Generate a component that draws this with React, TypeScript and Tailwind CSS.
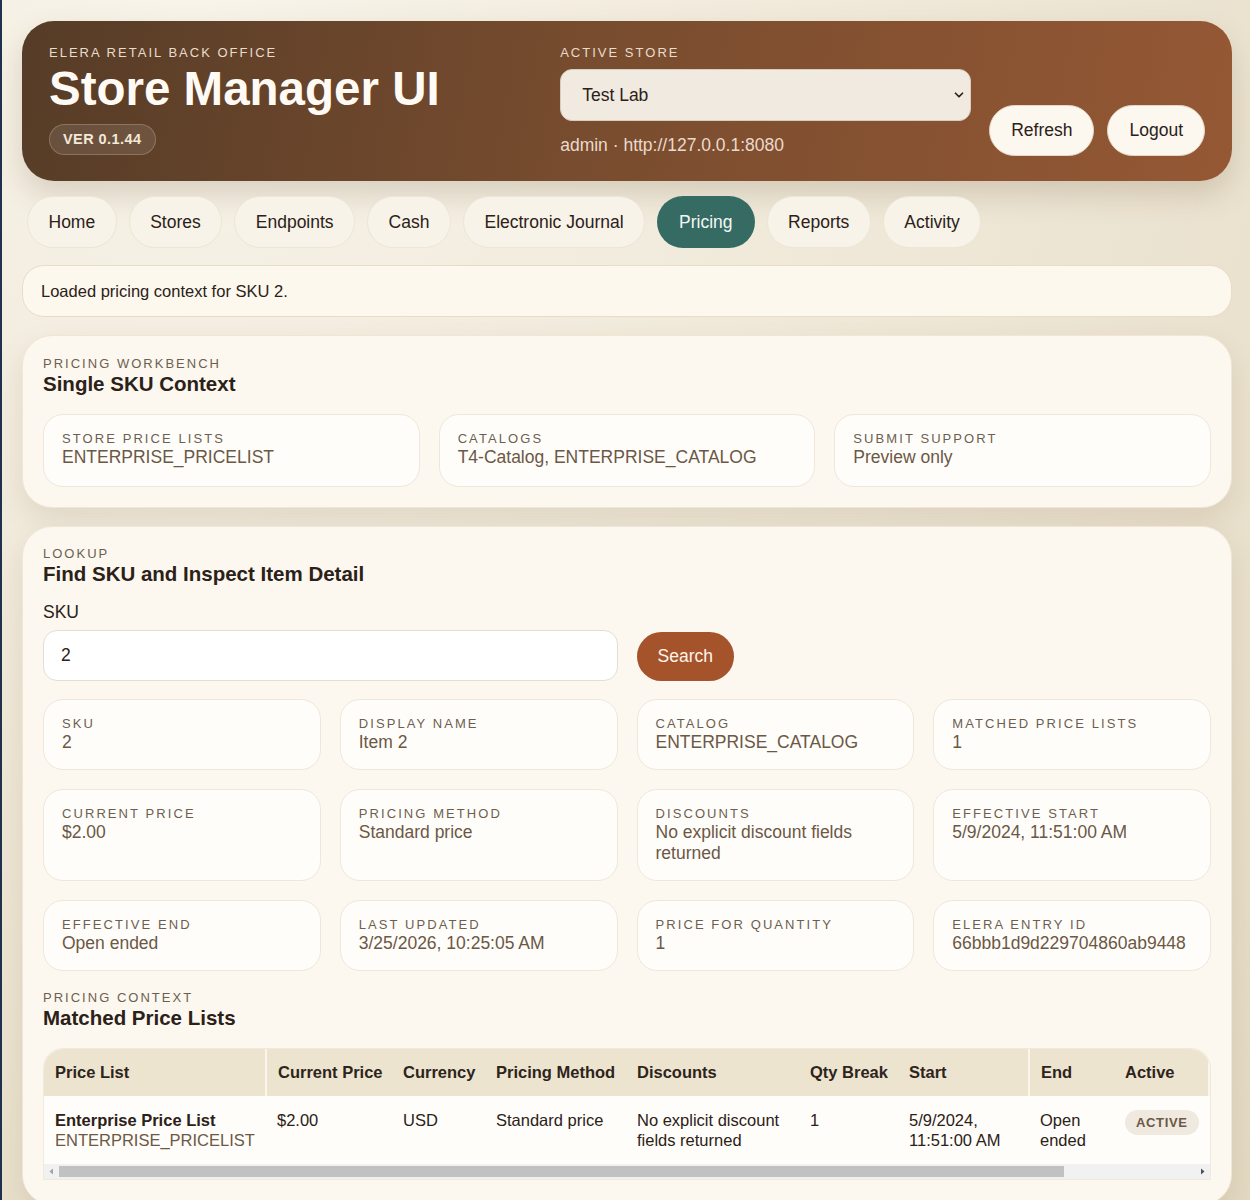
import { ChevronDown } from "lucide-react";

const navItems = ["Home", "Stores", "Endpoints", "Cash", "Electronic Journal", "Pricing", "Reports", "Activity"];

const contextCards = [
  { label: "Store Price Lists", value: "ENTERPRISE_PRICELIST" },
  { label: "Catalogs", value: "T4-Catalog, ENTERPRISE_CATALOG" },
  { label: "Submit Support", value: "Preview only" },
];

const detailCards = [
  { label: "SKU", value: "2" },
  { label: "Display Name", value: "Item 2" },
  { label: "Catalog", value: "ENTERPRISE_CATALOG" },
  { label: "Matched Price Lists", value: "1" },
  { label: "Current Price", value: "$2.00" },
  { label: "Pricing Method", value: "Standard price" },
  { label: "Discounts", value: "No explicit discount fields returned" },
  { label: "Effective Start", value: "5/9/2024, 11:51:00 AM" },
  { label: "Effective End", value: "Open ended" },
  { label: "Last Updated", value: "3/25/2026, 10:25:05 AM" },
  { label: "Price For Quantity", value: "1" },
  { label: "Elera Entry ID", value: "66bbb1d9d229704860ab9448" },
];

const columns = [
  { label: "Price List", width: "w-[222px]", sep: true },
  { label: "Current Price", width: "w-[126px]", sep: false },
  { label: "Currency", width: "w-[93px]", sep: false },
  { label: "Pricing Method", width: "w-[141px]", sep: false },
  { label: "Discounts", width: "w-[173px]", sep: false },
  { label: "Qty Break", width: "w-[99px]", sep: false },
  { label: "Start", width: "w-[131px]", sep: true },
  { label: "End", width: "w-[85px]", sep: false },
  { label: "Active", width: "w-[95px]", sep: true },
  { label: "", width: "w-[160px]", sep: false },
];

function Eyebrow({ children }: { children: React.ReactNode }) {
  return <p className="text-[13px] uppercase leading-4 tracking-[0.155em] text-[#6d5f50]">{children}</p>;
}

function InfoCard({ label, value, tall }: { label: string; value: string; tall?: boolean }) {
  return (
    <div className={`rounded-[20px] border border-[#efe7da] bg-[#fffdfa] px-[18px] pt-[16px] ${tall ? "pb-[18px]" : "pb-[16px]"}`}>
      <p className="text-[13px] uppercase leading-4 tracking-[0.16em] text-[#6d5f50]">{label}</p>
      <p className="text-[17.5px] leading-[21px] text-[#6b5845]">{value}</p>
    </div>
  );
}

export default function App() {
  return (
    <div
      className="min-h-screen border-l-2 border-[#20324f] bg-[radial-gradient(circle_at_15%_0%,#f8f4ea_0%,#efe8d8_45%,#e3d9c1_100%)] pb-10 pl-[20px] pr-[18px] pt-[21px] text-[#2b2118]"
      style={{ fontFamily: '"Liberation Sans", Arial, sans-serif' }}
    >
      <div className="flex flex-col">
        <header className="flex h-[160px] rounded-[32px] bg-[linear-gradient(100deg,#563c27_0%,#7a4d2f_50%,#955835_100%)] px-[27px] pb-[25px] pt-[24px] shadow-[0_14px_30px_rgba(90,60,30,0.18)]">
          <div className="flex-1">
            <p className="text-[13px] uppercase leading-4 tracking-[0.155em] text-[#e9dccb]">Elera Retail Back Office</p>
            <h1 className="mt-[2px] text-[47.5px] font-bold leading-[52px] text-[#fffaf3]">Store Manager UI</h1>
            <div className="mt-[9px] flex h-[31px] w-fit items-center rounded-full border border-white/20 bg-white/10 px-[13px] text-[14.5px] font-bold tracking-[0.03em] text-[#f4e8d8]">
              VER 0.1.44
            </div>
          </div>
          <div className="w-[411px]">
            <p className="text-[13px] uppercase leading-4 tracking-[0.155em] text-[#e9dccb]">Active Store</p>
            <div className="mt-[8px] flex h-[52px] items-center justify-between rounded-[12px] border border-[#d9cdbd] bg-[#f1eae0] pl-[21px] pr-[4px] text-[17.5px] text-[#2b2118]">
              <span>Test Lab</span>
              <ChevronDown size={14} strokeWidth={3} />
            </div>
            <p className="mt-[14px] text-[17.5px] leading-[20px] text-[#eadacb]">admin · http://127.0.0.1:8080</p>
          </div>
          <div className="ml-[18px] flex items-end gap-[13px]">
            <button className="h-[51px] rounded-full border border-[#e6d8c6] bg-[#fcf7ef] px-[21px] text-[17.5px] text-[#2b2118]">Refresh</button>
            <button className="h-[51px] rounded-full border border-[#e6d8c6] bg-[#fcf7ef] px-[21px] text-[17.5px] text-[#2b2118]">Logout</button>
          </div>
        </header>

        <nav className="mt-[15px] flex gap-[12px] pl-[5px]">
          {navItems.map((item) =>
            item === "Pricing" ? (
              <button key={item} className="h-[52px] rounded-full bg-[#366b63] px-[22px] text-[17.5px] text-[#f3f7f4]">
                {item}
              </button>
            ) : (
              <button key={item} className="h-[52px] rounded-full border border-[#ede5d6] bg-[#f8f3e8] px-[20.5px] text-[17.5px] text-[#2b2118]">
                {item}
              </button>
            ),
          )}
        </nav>

        <div className="mt-[17px] flex h-[52px] items-center rounded-[22px] border border-[#e7dcc8] bg-[#fdf8ee] px-[18px] text-[16.5px] text-[#2b2118]">
          Loaded pricing context for SKU 2.
        </div>

        <section className="mt-[18px] rounded-[30px] border border-[#efe6d5] bg-[#fcf8ef] px-[20px] pb-[20px] pt-[20px] shadow-[0_12px_28px_rgba(120,95,55,0.14)]">
          <Eyebrow>Pricing Workbench</Eyebrow>
          <h2 className="text-[20.5px] font-bold leading-6 text-[#2b2118]">Single SKU Context</h2>
          <div className="mt-[18px] grid grid-cols-3 gap-[19px]">
            {contextCards.map((c) => (
              <InfoCard key={c.label} label={c.label} value={c.value} tall />
            ))}
          </div>
        </section>

        <section className="mt-[18px] rounded-[30px] border border-[#efe6d5] bg-[#fcf8ef] px-[20px] pb-[24px] pt-[19px] shadow-[0_12px_28px_rgba(120,95,55,0.14)]">
          <Eyebrow>Lookup</Eyebrow>
          <h2 className="text-[20.5px] font-bold leading-6 text-[#2b2118]">Find SKU and Inspect Item Detail</h2>
          <p className="mt-[14px] text-[17.5px] leading-[24px] text-[#2b2118]">SKU</p>
          <div className="mt-[6px] grid grid-cols-4 gap-x-[19px]">
            <div className="col-span-2 flex h-[51px] items-center rounded-[14px] border border-[#e5ddd0] bg-white px-[17px] text-[17.5px]">2</div>
            <div className="flex items-end">
              <button className="h-[49px] rounded-full bg-[#a5532b] px-[21px] text-[17.5px] text-[#fff5ec]">Search</button>
            </div>
          </div>
          <div className="mt-[18px] grid grid-cols-4 gap-[19px]">
            {detailCards.map((c) => (
              <InfoCard key={c.label} label={c.label} value={c.value} />
            ))}
          </div>

          <div className="mt-[19px]">
            <Eyebrow>Pricing Context</Eyebrow>
            <h2 className="text-[20.5px] font-bold leading-6 text-[#2b2118]">Matched Price Lists</h2>
          </div>
          <div className="mt-[18px] rounded-t-[20px] border border-[#f0e9dd]">
            <div className="overflow-hidden rounded-t-[20px]">
              <table className="w-[1325px] table-fixed border-collapse text-left text-[16.5px]">
                <thead>
                  <tr className="h-[47px] bg-[#ede4d0] text-[#2d241b]">
                    {columns.map((col, i) => (
                      <th
                        key={i}
                        className={`${col.width} whitespace-nowrap px-[11px] font-bold ${col.sep ? "border-r-2 border-[#faf6ee]" : ""}`}
                      >
                        {col.label}
                      </th>
                    ))}
                  </tr>
                </thead>
                <tbody>
                  <tr className="bg-[#fffdf9] align-top leading-[20px] text-[#2b2118]">
                    <td className="px-[11px] pb-[14px] pt-[14px]">
                      <div className="font-bold">Enterprise Price List</div>
                      <div className="text-[#6b5845]">ENTERPRISE_PRICELIST</div>
                    </td>
                    <td className="px-[11px] pt-[14px]">$2.00</td>
                    <td className="px-[11px] pt-[14px]">USD</td>
                    <td className="px-[11px] pt-[14px]">Standard price</td>
                    <td className="px-[11px] pt-[14px]">No explicit discount fields returned</td>
                    <td className="px-[11px] pt-[14px]">1</td>
                    <td className="px-[11px] pt-[14px]">5/9/2024, 11:51:00 AM</td>
                    <td className="px-[11px] pt-[14px]">Open ended</td>
                    <td className="px-[11px] pt-[14px]">
                      <span className="inline-flex h-[25px] items-center rounded-full bg-[#efe9df] px-[11px] text-[13px] font-bold tracking-[0.05em] text-[#6b5845]">
                        ACTIVE
                      </span>
                    </td>
                    <td className="px-[11px] pt-[14px]" />
                  </tr>
                </tbody>
              </table>
            </div>
            <div className="flex h-[15px] items-center bg-[#f1f1f1]">
              <svg width="15" height="15" viewBox="0 0 15 15" className="shrink-0">
                <path d="M9 4.5 L5.5 7.5 L9 10.5 Z" fill="#a3a3a3" />
              </svg>
              <div className="h-[11px] w-[1005px] bg-[#c1c1c1]" />
              <div className="flex-1" />
              <svg width="15" height="15" viewBox="0 0 15 15" className="shrink-0">
                <path d="M6 4.5 L9.5 7.5 L6 10.5 Z" fill="#505050" />
              </svg>
            </div>
          </div>
        </section>
      </div>
    </div>
  );
}
